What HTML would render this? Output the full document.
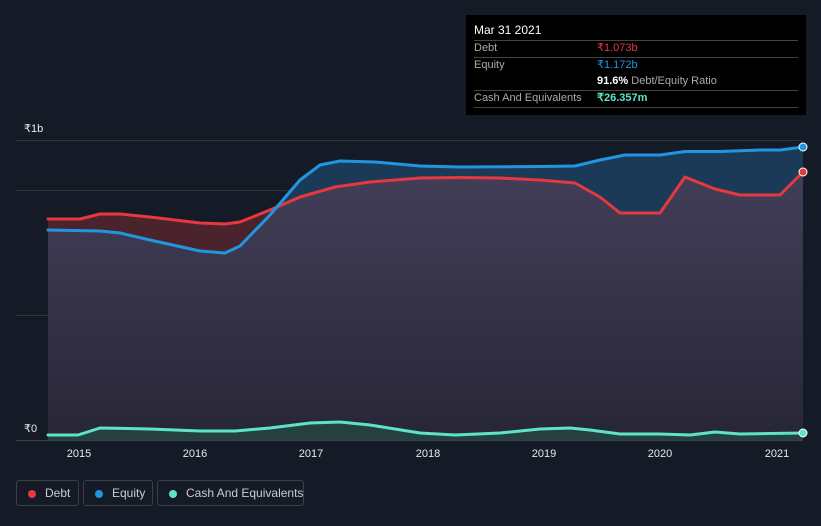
<!DOCTYPE html>
<html><head><meta charset="utf-8"><style>
body{margin:0;background:#151b26;width:821px;height:526px;overflow:hidden;font-family:"Liberation Sans",sans-serif;position:relative}
.tt{position:absolute;left:466px;top:15px;width:340px;height:100px;background:#000;font-size:11px;color:#fff}
.ln{position:absolute;left:8px;right:8px;height:1px;background:#444}
.tx{position:absolute;white-space:nowrap;line-height:13px}
.lg{position:absolute;top:480px;height:26px;border:1px solid #3a3f4a;border-radius:3px;color:#c9ccd2;font-size:12px;line-height:24px;box-sizing:border-box;white-space:nowrap}
.lg i{position:absolute;left:11px;top:9px;width:8px;height:8px;border-radius:50%}
.lg b{font-weight:normal;position:absolute;left:28px;white-space:nowrap}
</style></head><body>
<svg width="821" height="526" style="position:absolute;left:0;top:0">
<defs>
<clipPath id="eq"><polygon points="48,230 100,231 120,233 150,240 200,251 225,253 240,246 270,215 300,180 320,165 340,161 375,162 420,166 460,167 540,166.5 575,166 600,160 625,155 660,155 685,151.5 720,151.5 760,150 780,150 803,147 803,440 48,440"/></clipPath>
<linearGradient id="pg" x1="0" y1="0" x2="0" y2="1"><stop offset="0" stop-color="#433e58"/><stop offset="1" stop-color="#272636"/></linearGradient>
</defs>
<g stroke="#2e333d" stroke-width="1"><line x1="16" y1="140.5" x2="803" y2="140.5"/><line x1="16" y1="190.5" x2="803" y2="190.5"/><line x1="16" y1="315.5" x2="803" y2="315.5"/><line x1="16" y1="440.5" x2="803" y2="440.5" stroke="#3a3f49"/></g>
<polygon fill="#4a232d" points="48,219 80,219 100,214 120,214 150,217 200,223 225,224 240,222 270,210 300,197 335,187 370,182 420,178 460,177.5 500,178 540,180 575,183 600,197 620,213 660,213 685,177 715,189 740,195 780,195 803,172 803,440 48,440"/>
<polygon fill="#1a3a57" points="48,230 100,231 120,233 150,240 200,251 225,253 240,246 270,215 300,180 320,165 340,161 375,162 420,166 460,167 540,166.5 575,166 600,160 625,155 660,155 685,151.5 720,151.5 760,150 780,150 803,147 803,440 48,440"/>
<polygon fill="url(#pg)" clip-path="url(#eq)" points="48,219 80,219 100,214 120,214 150,217 200,223 225,224 240,222 270,210 300,197 335,187 370,182 420,178 460,177.5 500,178 540,180 575,183 600,197 620,213 660,213 685,177 715,189 740,195 780,195 803,172 803,440 48,440"/>
<polygon fill="#24403f" points="48,435 78,435 100,428 150,429 200,431 235,431 270,428 310,423 340,422 370,425 420,433 455,435 500,433 540,429 570,428 590,430 620,434 660,434 690,435 715,432 740,434 803,433 803,440 48,440"/>
<g fill="none" stroke-width="3" stroke-linejoin="round" stroke-linecap="round">
<polyline stroke="#e5383f" points="48,219 80,219 100,214 120,214 150,217 200,223 225,224 240,222 270,210 300,197 335,187 370,182 420,178 460,177.5 500,178 540,180 575,183 600,197 620,213 660,213 685,177 715,189 740,195 780,195 803,172"/>
<polyline stroke="#2196e0" points="48,230 100,231 120,233 150,240 200,251 225,253 240,246 270,215 300,180 320,165 340,161 375,162 420,166 460,167 540,166.5 575,166 600,160 625,155 660,155 685,151.5 720,151.5 760,150 780,150 803,147"/>
<polyline stroke="#5ee3c9" points="48,435 78,435 100,428 150,429 200,431 235,431 270,428 310,423 340,422 370,425 420,433 455,435 500,433 540,429 570,428 590,430 620,434 660,434 690,435 715,432 740,434 803,433"/>
</g>
<circle cx="803" cy="172" r="4" fill="#e5383f" stroke="#fff" stroke-width="1"/>
<circle cx="803" cy="147" r="4" fill="#2196e0" stroke="#fff" stroke-width="1"/>
<circle cx="803" cy="433" r="4" fill="#5ee3c9" stroke="#fff" stroke-width="1"/>
<g fill="#e6e8ec" font-size="11" font-family="Liberation Sans,sans-serif">
<text x="24" y="132">₹1b</text><text x="24" y="432">₹0</text>
<g text-anchor="middle"><text x="79" y="457">2015</text><text x="195" y="457">2016</text><text x="311" y="457">2017</text><text x="428" y="457">2018</text><text x="544" y="457">2019</text><text x="660" y="457">2020</text><text x="777" y="457">2021</text></g>
</g>
</svg>
<div class="tt">
<div class="tx" style="left:8px;top:9px;font-size:12px">Mar 31 2021</div>
<div class="ln" style="top:25px"></div>
<div class="tx" style="left:8px;top:27px;color:#aaa">Debt</div><div class="tx" style="left:131px;top:27px;color:#e5383f">₹1.073b</div>
<div class="ln" style="top:42px"></div>
<div class="tx" style="left:8px;top:44px;color:#aaa">Equity</div><div class="tx" style="left:131px;top:44px;color:#2196e0">₹1.172b</div>
<div class="tx" style="left:131px;top:60px"><b>91.6%</b> <span style="color:#aaa">Debt/Equity Ratio</span></div>
<div class="ln" style="top:75px"></div>
<div class="tx" style="left:8px;top:77px;color:#aaa">Cash And Equivalents</div><div class="tx" style="left:131px;top:77px;color:#5ee3c9;font-weight:bold">₹26.357m</div>
<div class="ln" style="top:92px"></div>
</div>
<div class="lg" style="left:16px;width:63px"><i style="background:#e5383f"></i><b>Debt</b></div>
<div class="lg" style="left:83px;width:70px"><i style="background:#2196e0"></i><b>Equity</b></div>
<div class="lg" style="left:157px;width:147px"><i style="background:#5ee3c9"></i><b>Cash And Equivalents</b></div>
</body></html>
